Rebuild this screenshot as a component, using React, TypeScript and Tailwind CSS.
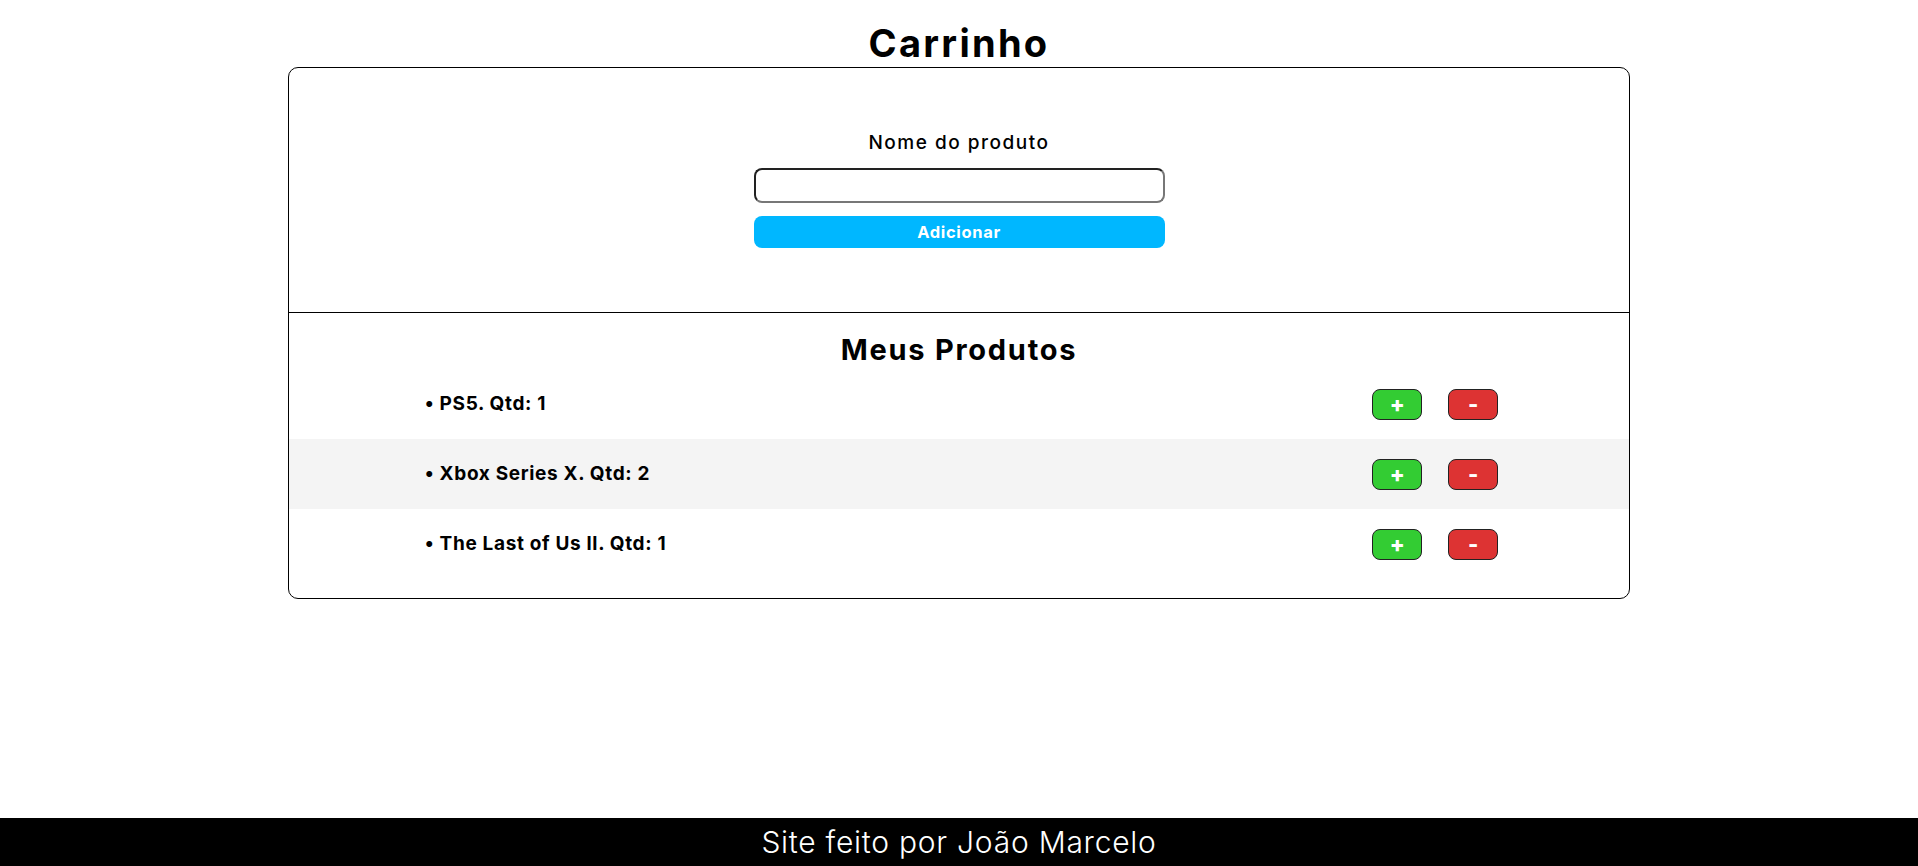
import React from "react";

type Produto = { nome: string; qtd: number };

const produtos: Produto[] = [
  { nome: "PS5", qtd: 1 },
  { nome: "Xbox Series X", qtd: 2 },
  { nome: "The Last of Us ll", qtd: 1 },
];

function ItemProduto({ produto, index }: { produto: Produto; index: number }) {
  return (
    <li
      className={
        "flex items-center justify-between h-[70px] pl-[136px] pr-[131px] " +
        (index % 2 === 1 ? "bg-[#f4f4f4]" : "bg-white")
      }
    >
      <span className="text-[19px] font-bold tracking-[0.035em] text-black">
        • {produto.nome}. Qtd: {produto.qtd}
      </span>
      <div className="flex items-center gap-[26px]">
        <button className="w-[50px] h-[31px] rounded-[8px] border border-[#222] bg-[#33cc33] text-white font-extrabold text-[22px] leading-none">
          +
        </button>
        <button className="w-[50px] h-[31px] rounded-[8px] border border-[#222] bg-[#dd3333] text-white font-extrabold text-[22px] leading-none">
          -
        </button>
      </div>
    </li>
  );
}

export default function App() {
  return (
    <div className="min-h-screen flex flex-col bg-white text-black font-['Inter',sans-serif]">
      <main>
        <h1 className="mt-[21px] text-center text-[38px] leading-[44px] font-bold tracking-[0.06em]">
          Carrinho
        </h1>

        <section className="w-[70%] mx-auto mt-[2px] border border-black rounded-[10px] overflow-hidden">
          {/* Form */}
          <div className="h-[245px] border-b border-black flex flex-col items-center justify-center">
            <label className="text-[19px] font-medium leading-[22px] tracking-[0.08em] mb-[14px]">
              Nome do produto
            </label>
            <input
              type="text"
              className="w-[411px] h-[35px] rounded-[8px] border-2 border-t-[#222] border-l-[#222] border-b-[#777] border-r-[#777] px-2 outline-none"
            />
            <button className="mt-[13px] w-[411px] h-[32px] rounded-[8px] bg-[#00b7ff] text-white font-bold text-[16.5px] tracking-[0.04em]">
              Adicionar
            </button>
          </div>

          {/* Lista */}
          <div className="pt-[20px] pb-[19px]">
            <h2 className="text-center text-[29px] leading-[34px] font-bold tracking-[0.06em] mb-[2px]">
              Meus Produtos
            </h2>
            <ul>
              {produtos.map((p, i) => (
                <ItemProduto key={p.nome} produto={p} index={i} />
              ))}
            </ul>
          </div>
        </section>
      </main>

      <footer className="mt-auto h-[48px] bg-black text-white flex items-center justify-center text-[30px] font-light tracking-[0.025em]">
        Site feito por João Marcelo
      </footer>
    </div>
  );
}
